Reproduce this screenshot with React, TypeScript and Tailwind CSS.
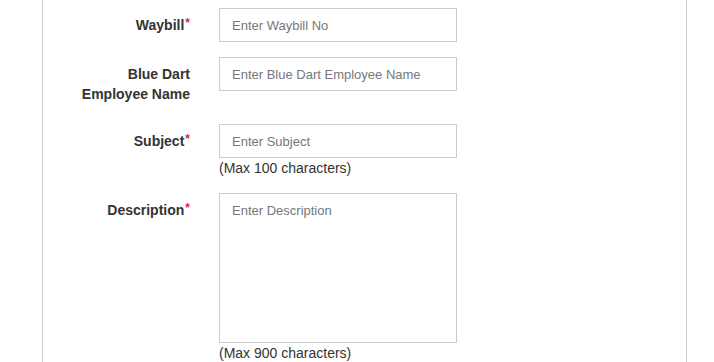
const Req = () => <span className="text-[12px] leading-none align-top text-[#e8174a] relative top-[2px] ml-[1px]">*</span>;

const App = () => {
    return (
        <div className="w-[714px] h-[362px] bg-white overflow-hidden font-['Liberation_Sans',Arial,sans-serif] text-[14px] leading-[20px] text-[#333]">
            <div className="ml-[42px] w-[645px] h-full border-x border-[#ccc] pt-[8px]">
                {/* Waybill */}
                <div className="flex mb-[15px]">
                    <label className="w-[147px] text-right font-bold pt-[7px]">
                        Waybill<Req />
                    </label>
                    <div className="ml-[29px]">
                        <input
                            type="text"
                            placeholder="Enter Waybill No"
                            className="w-[238px] h-[34px] border border-[#ccc] px-[12px] text-[13px] placeholder:text-[#777] outline-none"
                        />
                    </div>
                </div>

                {/* Employee */}
                <div className="flex mb-[15px]">
                    <label className="w-[147px] text-right font-bold pt-[7px] pb-[5px] pl-[30px]">
                        Blue Dart Employee Name
                    </label>
                    <div className="ml-[29px]">
                        <input
                            type="text"
                            placeholder="Enter Blue Dart Employee Name"
                            className="w-[238px] h-[34px] border border-[#ccc] px-[12px] text-[13px] placeholder:text-[#777] outline-none"
                        />
                    </div>
                </div>

                {/* Subject */}
                <div className="flex mb-[15px]">
                    <label className="w-[147px] text-right font-bold pt-[7px]">
                        Subject<Req />
                    </label>
                    <div className="ml-[29px]">
                        <input
                            type="text"
                            placeholder="Enter Subject"
                            className="block w-[238px] h-[34px] border border-[#ccc] px-[12px] text-[13px] placeholder:text-[#777] outline-none"
                        />
                        <div>(Max 100 characters)</div>
                    </div>
                </div>

                {/* Description */}
                <div className="flex">
                    <label className="w-[147px] text-right font-bold pt-[7px]">
                        Description<Req />
                    </label>
                    <div className="ml-[29px]">
                        <textarea
                            placeholder="Enter Description"
                            className="block w-[238px] h-[150px] border border-[#ccc] px-[12px] py-[7px] text-[13px] placeholder:text-[#777] outline-none resize-none"
                        />
                        <div>(Max 900 characters)</div>
                    </div>
                </div>
            </div>
        </div>
    );
};

export default App;
